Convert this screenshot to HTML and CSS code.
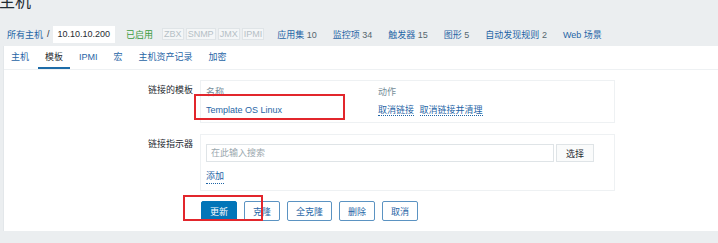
FILE: index.html
```html
<!DOCTYPE html>
<html lang="zh-CN">
<head>
    <meta charset="UTF-8">
    <title>主机</title>
    <link rel="stylesheet" href="styles.css">
</head>
<body>
    <!-- Page title -->
    <div class="header">
        <h1 class="title">主机</h1>
    </div>

    <!-- Host navigation -->
    <div class="host-nav">
        <a class="link">所有主机</a>
        <span class="sep">/</span>
        <span class="crumb-current">10.10.10.200</span>
        <span class="status-on">已启用</span>
        <div class="avail">
            <span class="avail-box">ZBX</span>
            <span class="avail-box">SNMP</span>
            <span class="avail-box">JMX</span>
            <span class="avail-box">IPMI</span>
        </div>
        <div class="entities">
            <span><a class="link">应用集</a> <span class="count">10</span></span>
            <span><a class="link">监控项</a> <span class="count">34</span></span>
            <span><a class="link">触发器</a> <span class="count">15</span></span>
            <span><a class="link">图形</a> <span class="count">5</span></span>
            <span><a class="link">自动发现规则</a> <span class="count">2</span></span>
            <span><a class="link">Web 场景</a></span>
        </div>
    </div>

    <!-- Form panel -->
    <div class="panel">
        <ul class="tabs">
            <li class="tab">主机</li>
            <li class="tab active">模板</li>
            <li class="tab">IPMI</li>
            <li class="tab">宏</li>
            <li class="tab">主机资产记录</li>
            <li class="tab">加密</li>
        </ul>

        <div class="form">
            <div class="form-row">
                <div class="form-label">链接的模板</div>
                <div class="form-box table-box">
                    <div class="tpl-row tpl-head">
                        <span class="col-name">名称</span>
                        <span class="col-action">动作</span>
                    </div>
                    <div class="tpl-row">
                        <span class="col-name"><a class="link">Template OS Linux</a></span>
                        <span class="col-action">
                            <a class="link link-action">取消链接</a>
                            <a class="link link-action">取消链接并清理</a>
                        </span>
                    </div>
                    <div class="mark mark-template"></div>
                </div>
            </div>

            <div class="form-row">
                <div class="form-label">链接指示器</div>
                <div class="form-box search-box">
                    <div class="search-line">
                        <input class="search-input" type="text" placeholder="在此输入搜索">
                        <button class="btn-grey">选择</button>
                    </div>
                    <a class="link link-action add-link">添加</a>
                </div>
            </div>

            <div class="buttons">
                <button class="btn btn-main">更新</button>
                <button class="btn">克隆</button>
                <button class="btn">全克隆</button>
                <button class="btn">删除</button>
                <button class="btn">取消</button>
                <div class="mark mark-update"></div>
            </div>
        </div>
    </div>
</body>
</html>
```

FILE: styles.css
```css
* {
    margin: 0;
    padding: 0;
    box-sizing: border-box;
}

body {
    font-family: 'Liberation Sans', 'Noto Sans CJK SC', sans-serif;
    font-size: 9px;
    color: #1f2c33;
    background: #ebeef0;
    width: 718px;
    height: 243px;
    overflow: hidden;
}

.link {
    color: #1f65a6;
    text-decoration: none;
}

/* Header */
.header {
    height: 22px;
    overflow: hidden;
}

.title {
    font-size: 16px;
    font-weight: normal;
    line-height: 16px;
    margin-top: -6px;
    margin-left: -1px;
}

/* Host nav */
.host-nav {
    height: 24px;
    display: flex;
    align-items: center;
    padding-left: 7px;
}

.sep {
    margin: 0 3px 0 4px;
}

.crumb-current {
    background: white;
    height: 17px;
    line-height: 17px;
    padding: 0 5px;
}

.status-on {
    color: #3a9c3f;
    margin-left: 11px;
}

.avail {
    display: flex;
    gap: 2px;
    margin-left: 9px;
}

.avail-box {
    height: 12px;
    line-height: 10px;
    padding: 0 1px;
    border: 1px solid #dfe4e7;
    background: #f4f6f7;
    color: #b5c0c6;
}

.entities {
    display: flex;
    gap: 16px;
    margin-left: 13px;
}

.count {
    color: #56666e;
}

/* Panel */
.panel {
    margin-left: 3px;
    height: 185px;
    background: white;
    border-left: 1px solid #e3e7ea;
}

.tabs {
    list-style: none;
    display: flex;
    gap: 2px;
    height: 24px;
    border-bottom: 1px solid #eef1f3;
}

.tab {
    padding: 0 7px;
    line-height: 22px;
    color: #1f65a6;
}

.tab.active {
    color: #1f2c33;
    border-bottom: 2px solid #1d6ca8;
}

/* Form */
.form {
    padding-top: 10px;
}

.form-row {
    display: flex;
    gap: 7px;
    margin-bottom: 11px;
}

.form-label {
    width: 189px;
    text-align: right;
    line-height: 18px;
    padding-top: 1px;
}

.form-box {
    position: relative;
    width: 415px;
    border: 1px solid #eef1f3;
    padding: 0 5px;
}

.table-box {
    padding-top: 2px;
    padding-bottom: 3px;
}

.tpl-row {
    display: flex;
    line-height: 18px;
}

.tpl-head {
    color: #768d99;
}

.col-name {
    width: 172px;
}

.link-action {
    border-bottom: 1px dotted #1f65a6;
    margin-right: 3px;
}

.search-box {
    padding-top: 9px;
    padding-bottom: 6px;
}

.search-line {
    display: flex;
    gap: 2px;
    height: 18px;
    margin-bottom: 6px;
}

.search-input {
    width: 348px;
    height: 18px;
    border: 1px solid #dfe4e7;
    padding: 0 4px;
    font: inherit;
    outline: none;
}

.search-input::placeholder {
    color: #9aa7ae;
}

.btn-grey {
    width: 38px;
    height: 18px;
    border: 1px solid #dfe4e7;
    background: #fafbfb;
    font: inherit;
    color: #1f2c33;
}

.add-link {
    display: inline-block;
    line-height: 14px;
    margin-top: 1px;
}

/* Buttons */
.buttons {
    position: relative;
    display: flex;
    gap: 7px;
    margin-left: 197px;
    margin-top: -1px;
}

.btn {
    height: 20px;
    padding: 0 8px;
    font: inherit;
    color: #1f65a6;
    background: white;
    border: 1px solid #5b93c2;
    border-radius: 2px;
}

.btn-main {
    color: white;
    background: #0275b8;
    border-color: #0275b8;
}

/* Red annotation boxes */
.mark {
    position: absolute;
    border: 2px solid #e2262c;
}

.mark-template {
    left: -7px;
    top: 13px;
    width: 151px;
    height: 26px;
}

.mark-update {
    left: -18px;
    top: -6px;
    width: 80px;
    height: 26px;
}
```
